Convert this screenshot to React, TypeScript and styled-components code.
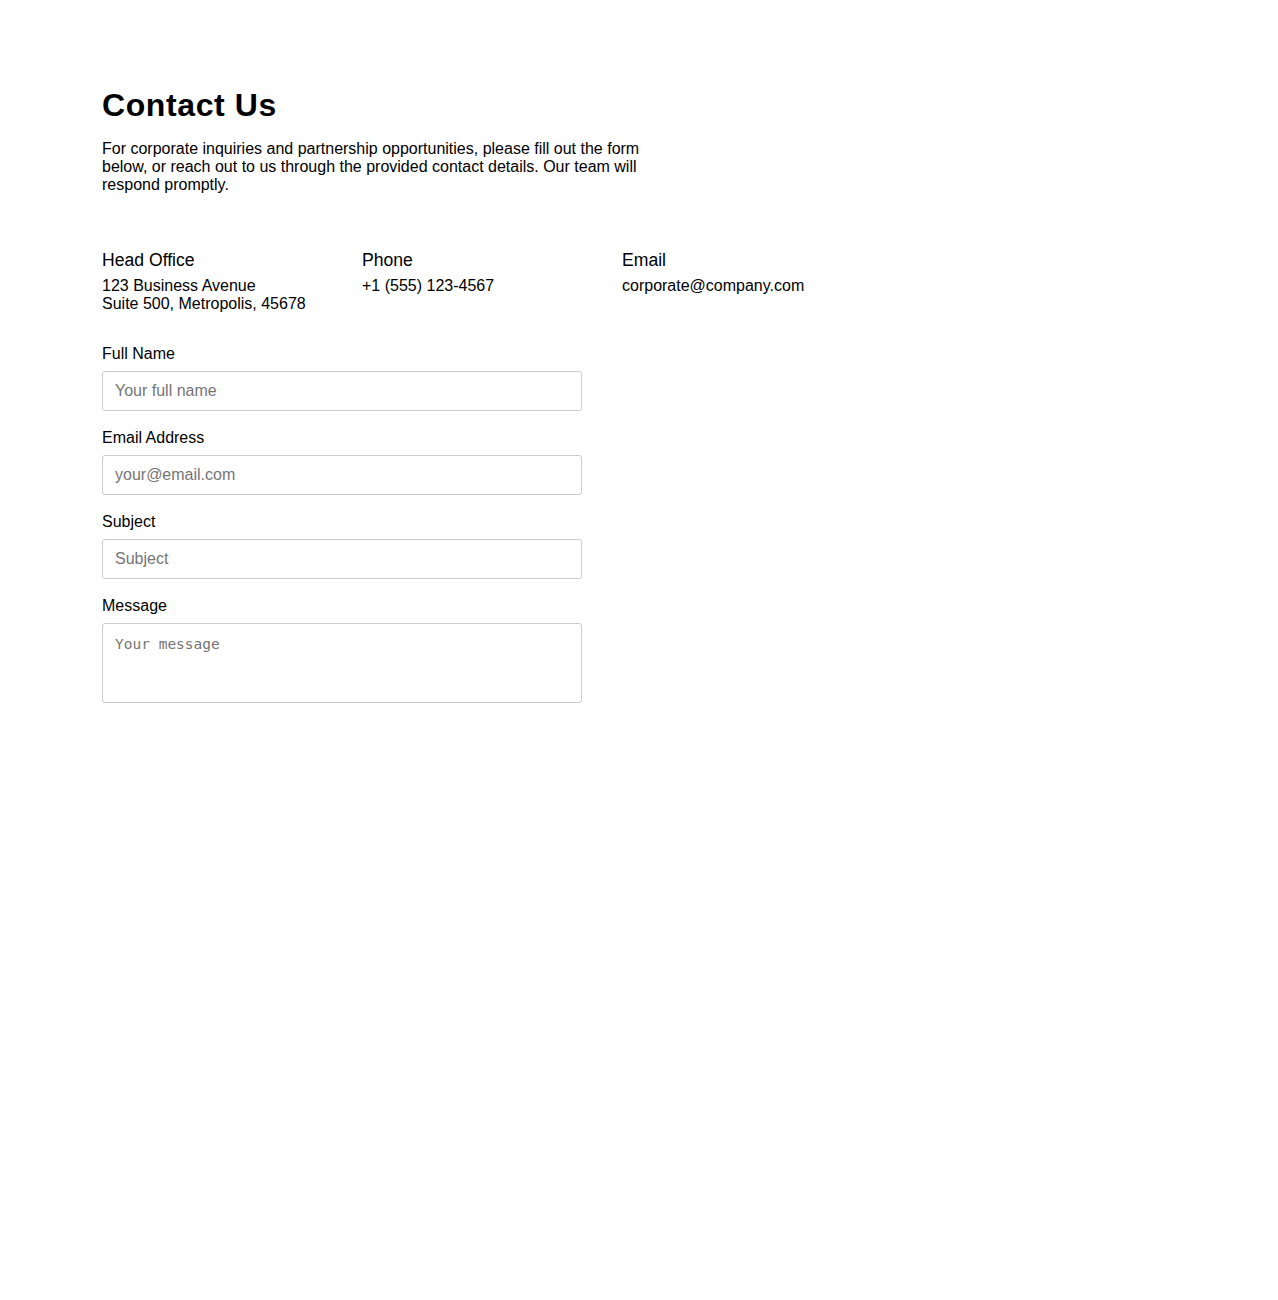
import styled, { createGlobalStyle } from "styled-components";

const offices = [
  { title: "Head Office", lines: ["123 Business Avenue", "Suite 500, Metropolis, 45678"] },
  { title: "Phone", lines: ["+1 (555) 123-4567"] },
  { title: "Email", lines: ["corporate@company.com"] },
];

const fields = [
  { id: "name", label: "Full Name", placeholder: "Your full name", type: "text" },
  { id: "email", label: "Email Address", placeholder: "your@email.com", type: "email" },
  { id: "subject", label: "Subject", placeholder: "Subject", type: "text" },
];

export default function App() {
  return (
    <>
      <GlobalStyle />
      <Page>
        <Title>Contact Us</Title>
        <Intro>
          For corporate inquiries and partnership opportunities, please fill out the form below, or
          reach out to us through the provided contact details. Our team will respond promptly.
        </Intro>

        <InfoGrid>
          {offices.map((o) => (
            <InfoBlock key={o.title}>
              <InfoTitle>{o.title}</InfoTitle>
              {o.lines.map((l) => (
                <InfoLine key={l}>{l}</InfoLine>
              ))}
            </InfoBlock>
          ))}
        </InfoGrid>

        <Form onSubmit={(e) => e.preventDefault()}>
          {fields.map((f) => (
            <Field key={f.id}>
              <Label htmlFor={f.id}>{f.label}</Label>
              <Input id={f.id} type={f.type} placeholder={f.placeholder} />
            </Field>
          ))}
          <Field>
            <Label htmlFor="message">Message</Label>
            <TextArea id="message" placeholder="Your message" />
          </Field>
        </Form>
      </Page>
    </>
  );
}

const GlobalStyle = createGlobalStyle`
  body {
    margin: 0;
    background: #ffffff;
    color: #000000;
    font-family: "Liberation Sans", Arial, sans-serif;
  }
`;

const Page = styled.main`
  padding: 87px 102px 80px;
`;

const Title = styled.h1`
  font-size: 32px;
  font-weight: 700;
  letter-spacing: 0.6px;
  margin: 0 0 16px;
`;

const Intro = styled.p`
  font-size: 16px;
  max-width: 540px;
  margin: 0 0 56px;
`;

const InfoGrid = styled.div`
  display: grid;
  grid-template-columns: repeat(3, 220px);
  column-gap: 40px;
  margin-bottom: 32px;
`;

const InfoBlock = styled.div`
  display: flex;
  flex-direction: column;
`;

const InfoTitle = styled.h3`
  font-size: 17.6px;
  font-weight: 400;
  margin: 0 0 6px;
`;

const InfoLine = styled.span`
  font-size: 16px;
  line-height: 18px;
`;

const Form = styled.form`
  display: flex;
  flex-direction: column;
  gap: 18px;
  max-width: 480px;
`;

const Field = styled.div`
  display: flex;
  flex-direction: column;
  gap: 8px;
`;

const Label = styled.label`
  font-size: 16px;
`;

const Input = styled.input`
  box-sizing: border-box;
  height: 40px;
  padding: 0 12px;
  border: 1px solid #cccccc;
  border-radius: 3px;
  font-family: "Liberation Sans", Arial, sans-serif;
  font-size: 16px;
  &::placeholder { color: #757575; }
`;

const TextArea = styled.textarea`
  box-sizing: border-box;
  height: 80px;
  padding: 12px;
  border: 1px solid #cccccc;
  border-radius: 3px;
  resize: none;
  font-family: "DejaVu Sans Mono", monospace;
  font-size: 14.5px;
  &::placeholder { color: #757575; }
`;
